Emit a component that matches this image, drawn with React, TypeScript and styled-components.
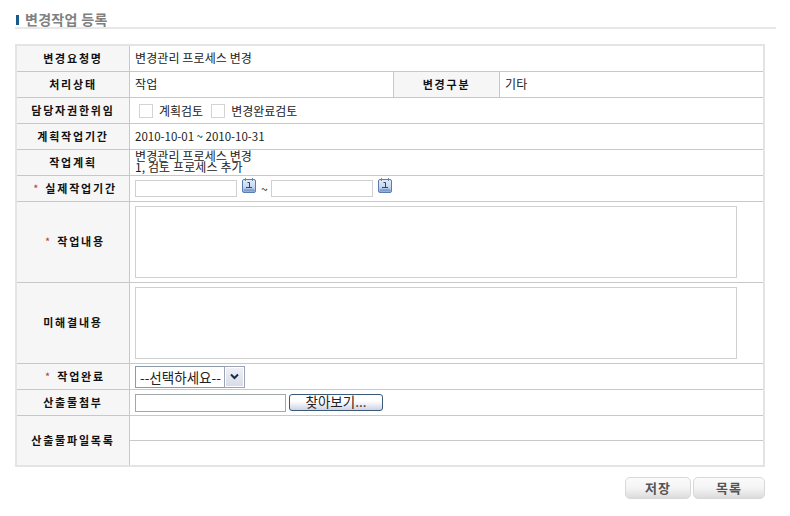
import React from "react";
import styled, { createGlobalStyle } from "styled-components";

const Global = createGlobalStyle`
  html, body { margin: 0; padding: 0; background: #fff; }
  body { font-family: "Noto Sans CJK KR", "Liberation Sans", sans-serif; font-size: 12px; color: #222; }
`;

const Page = styled.div`
  width: 790px;
  height: 516px;
  padding: 12px 15px 0 15px;
  box-sizing: border-box;
  overflow: hidden;
`;

const TitleBar = styled.div`
  display: flex;
  align-items: center;
  gap: 6px;
  height: 15px;
  width: 760px;
  padding-left: 1px;
  box-sizing: content-box;
  border-bottom: 2px solid #e8e8e8;
  font-size: 14px;
  line-height: 15px;
  font-weight: 700;
  letter-spacing: 0.3px;
  color: #808080;
`;

const TitleMark = styled.span`
  display: block;
  width: 3px;
  height: 10px;
  margin-top: 1px;
  background: #1a5a8a;
`;

const Table = styled.table`
  margin-top: 15px;
  width: 750px;
  height: 423px;
  border-collapse: separate;
  border-spacing: 0;
  table-layout: fixed;
  border: 2px solid #e4e4e4;
  box-sizing: border-box;
`;

const Row = styled.tr<{ $h: number }>`
  height: ${(p) => p.$h}px;
`;

const Label = styled.th<{ $divided?: boolean }>`
  background: #f6f6f6;
  border-bottom: 1px solid #c8c8c8;
  border-right: 1px solid #c8c8c8;
  border-left: ${(p) => (p.$divided ? "1px solid #c8c8c8" : "0")};
  padding: 0 0 2px;
  font-size: 11px;
  line-height: 14px;
  font-weight: 700;
  letter-spacing: 1.8px;
  color: #111;
  text-align: center;
  vertical-align: middle;
  box-sizing: border-box;
  tr:last-child & { border-bottom: 0; }
`;

const Cell = styled.td`
  border-bottom: 1px solid #c8c8c8;
  padding: 0 0 2px 5px;
  font-size: 12px;
  line-height: 11px;
  letter-spacing: 0.1px;
  color: #222;
  vertical-align: middle;
  box-sizing: border-box;
  tr:last-child & { border-bottom: 0; padding: 0 0 0 5px; }
`;

const FieldCell = styled(Cell)`
  padding-bottom: 0;
`;

const PlanCell = styled(Cell)`
  padding-bottom: 3px;
`;

const DateText = styled.span`
  font-size: 11.5px;
  letter-spacing: 0;
`;

const Required = styled.span`
  color: #c0392b;
  font-weight: 400;
  letter-spacing: 0;
  margin: 0 7px 0 4px;
`;

const Inline = styled.div`
  display: flex;
  align-items: center;
`;

const CheckBox = styled.span<{ $first?: boolean }>`
  display: block;
  width: 12px;
  height: 12px;
  margin: 0 6px 0 ${(p) => (p.$first ? "4px" : "0")};
  border: 1px solid #d4d4d4;
  background: #fff;
`;

const CheckLabel = styled.span`
  margin-right: 8px;
  font-size: 12px;
  line-height: 14px;
  letter-spacing: 0;
`;

const DateInput = styled.input`
  width: 102px;
  height: 17px;
  padding: 0;
  margin: 0;
  border: 1px solid #d0d0d0;
  box-sizing: border-box;
  background: #fff;
`;

const CalendarIcon = styled.svg`
  display: block;
  width: 14px;
  height: 15px;
  margin: -6px 5px 0 5px;
`;

const Tilde = styled.span`
  margin-right: 3px;
`;

const Area = styled.textarea`
  display: block;
  width: 602px;
  height: 72px;
  padding: 0;
  margin: 0;
  border: 1px solid #d0d0d0;
  box-sizing: border-box;
  resize: none;
  background: #fff;
`;

const SelectBox = styled.div`
  display: flex;
  width: 110px;
  height: 22px;
  border: 1px solid #8a9aa8;
  box-sizing: border-box;
  background: #fff;
`;

const Select = styled.select`
  appearance: none;
  flex: 1;
  min-width: 0;
  border: 0;
  outline: 0;
  padding: 0 0 0 4px;
  background: #fff;
  font: 13.5px "Noto Sans CJK KR", sans-serif;
  color: #222;
`;

const SelectArrow = styled.span`
  display: flex;
  align-items: center;
  justify-content: center;
  width: 17px;
  background: linear-gradient(#eef0f6, #d8dce8);
  border: 1px solid #fff;
  outline: 1px solid #9aa4b4;
`;

const FileText = styled.input`
  width: 151px;
  height: 18px;
  padding: 0;
  margin: 0;
  border: 1px solid #a0a8a8;
  box-sizing: border-box;
`;

const FileButton = styled.button`
  width: 94px;
  height: 17px;
  margin: -1px 0 0 3px;
  padding: 0 0 3px;
  border: 1px solid #3a5a78;
  border-radius: 3px;
  background: linear-gradient(#fff 40%, #d0d2e6);
  font: 13.5px/13px "Noto Sans CJK KR", sans-serif;
  color: #222;
`;

const SubRows = styled.div`
  display: grid;
  grid-template-rows: 25px 24px;
  margin-left: -5px;
`;

const SubRow = styled.div`
  &:first-child { border-bottom: 1px solid #c8c8c8; }
`;

const Footer = styled.div`
  display: flex;
  justify-content: flex-end;
  gap: 2px;
  width: 750px;
  margin-top: 10px;
`;

const ActionButton = styled.button<{ $w: number }>`
  width: ${(p) => p.$w}px;
  height: 22px;
  padding: 0 0 3px;
  border: 1px solid #d8d8d8;
  border-radius: 5px;
  background: linear-gradient(#fbfbfb, #f4f4f4 50%, #dcdcdc);
  font: 700 13px "Noto Sans CJK KR", sans-serif;
  letter-spacing: 1px;
  color: #555;
`;

const Calendar = () => (
  <CalendarIcon viewBox="0 0 14 15">
    <defs>
      <linearGradient id="calendar-face" x1="0" y1="0" x2="0" y2="1">
        <stop offset="0" stopColor="#e4ecf8" />
        <stop offset="0.55" stopColor="#c8d8f0" />
        <stop offset="1" stopColor="#86a8dc" />
      </linearGradient>
    </defs>
    <rect x="0.5" y="1.5" width="13" height="13" rx="1.5" fill="url(#calendar-face)" stroke="#5a7cb0" />
    <rect x="3" y="0" width="1" height="3" fill="#6f86a8" />
    <rect x="10" y="0" width="1" height="3" fill="#6f86a8" />
    <path d="M5.5 4.5h2v5M4 9.5h6" stroke="#28487c" fill="none" />
    <path d="M2.5 12h9" stroke="#2f4f88" strokeDasharray="1 1" />
  </CalendarIcon>
);

export default function App() {
  return (
    <Page>
      <Global />
      <TitleBar>
        <TitleMark />
        변경작업 등록
      </TitleBar>
      <Table>
        <colgroup>
          <col style={{ width: 113 }} />
          <col style={{ width: 263 }} />
          <col style={{ width: 107 }} />
          <col />
        </colgroup>
        <tbody>
          <Row $h={26}>
            <Label>변경요청명</Label>
            <Cell colSpan={3}>변경관리 프로세스 변경</Cell>
          </Row>
          <Row $h={26}>
            <Label>처리상태</Label>
            <Cell>작업</Cell>
            <Label $divided>변경구분</Label>
            <Cell>기타</Cell>
          </Row>
          <Row $h={26}>
            <Label>담당자권한위임</Label>
            <FieldCell colSpan={3}>
              <Inline>
                <CheckBox $first />
                <CheckLabel>계획검토</CheckLabel>
                <CheckBox />
                <CheckLabel>변경완료검토</CheckLabel>
              </Inline>
            </FieldCell>
          </Row>
          <Row $h={26}>
            <Label>계획작업기간</Label>
            <Cell colSpan={3}><DateText>2010-10-01 ~ 2010-10-31</DateText></Cell>
          </Row>
          <Row $h={26}>
            <Label>작업계획</Label>
            <PlanCell colSpan={3}>
              변경관리 프로세스 변경
              <br />
              1, 검토 프로세스 추가
            </PlanCell>
          </Row>
          <Row $h={26}>
            <Label><Required>*</Required>실제작업기간</Label>
            <FieldCell colSpan={3}>
              <Inline>
                <DateInput />
                <Calendar />
                <Tilde>~</Tilde>
                <DateInput />
                <Calendar />
              </Inline>
            </FieldCell>
          </Row>
          <Row $h={81}>
            <Label><Required>*</Required>작업내용</Label>
            <FieldCell colSpan={3}><Area /></FieldCell>
          </Row>
          <Row $h={81}>
            <Label>미해결내용</Label>
            <FieldCell colSpan={3}><Area /></FieldCell>
          </Row>
          <Row $h={26}>
            <Label><Required>*</Required>작업완료</Label>
            <FieldCell colSpan={3}>
              <SelectBox>
                <Select defaultValue="">
                  <option value="">--선택하세요--</option>
                </Select>
                <SelectArrow>
                  <svg width="9" height="7" viewBox="0 0 9 7">
                    <path d="M1 1.5l3.5 3.5L8 1.5" fill="none" stroke="#1c2c44" strokeWidth="2" />
                  </svg>
                </SelectArrow>
              </SelectBox>
            </FieldCell>
          </Row>
          <Row $h={26}>
            <Label>산출물첨부</Label>
            <FieldCell colSpan={3}>
              <Inline>
                <FileText />
                <FileButton type="button">찾아보기...</FileButton>
              </Inline>
            </FieldCell>
          </Row>
          <Row $h={49}>
            <Label>산출물파일목록</Label>
            <Cell colSpan={3}>
              <SubRows>
                <SubRow />
                <SubRow />
              </SubRows>
            </Cell>
          </Row>
        </tbody>
      </Table>
      <Footer>
        <ActionButton type="button" $w={66}>저장</ActionButton>
        <ActionButton type="button" $w={72}>목록</ActionButton>
      </Footer>
    </Page>
  );
}
